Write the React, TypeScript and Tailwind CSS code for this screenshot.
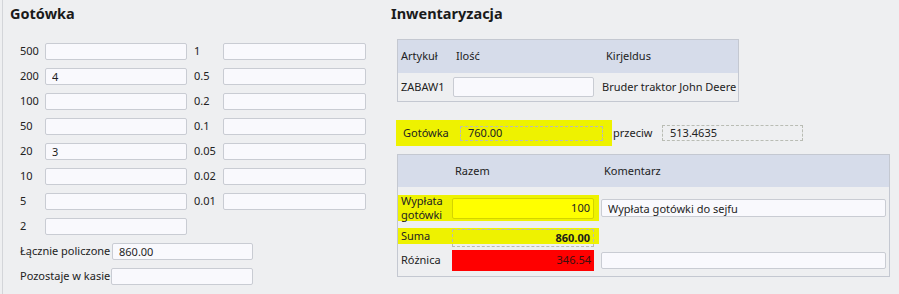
import React from "react";

const LEFT_ROWS = [
  ["500", ""],
  ["200", "4"],
  ["100", ""],
  ["50", ""],
  ["20", "3"],
  ["10", ""],
  ["5", ""],
  ["2", ""],
];

const RIGHT_ROWS = [
  ["1", ""],
  ["0.5", ""],
  ["0.2", ""],
  ["0.1", ""],
  ["0.05", ""],
  ["0.02", ""],
  ["0.01", ""],
];

function Field({ value = "", className = "" }: { value?: string; className?: string }) {
  return (
    <input
      readOnly
      value={value}
      className={`h-[17px] rounded-[2px] border border-[#c9ccd3] bg-[#f9f9fd] px-[6px] text-[11px] text-[#1e1e1e] outline-none ${className}`}
    />
  );
}

function Dotted({ value, className = "" }: { value: string; className?: string }) {
  return (
    <div className={`flex items-center border border-dashed border-[#b9bcb4] px-[7px] ${className}`}>
      {value}
    </div>
  );
}

export default function App() {
  return (
    <div className="flex h-[294px] w-[899px] whitespace-nowrap bg-[#eeeff1] font-['Noto_Sans',sans-serif] text-[11px] text-[#222]">
      {/* Gotówka */}
      <section className="ml-[2px] flex w-[378px] flex-col border-l border-[#d3d5d9]">
        <h2 className="pl-[7px] pt-[3px] text-[14.5px] font-bold leading-[20px] text-[#1a1a1a]">Gotówka</h2>

        <div className="ml-[17px] mt-[20px] grid grid-cols-[25px_142px_36px_143px] auto-rows-[17px] gap-y-[8px]">
          {LEFT_ROWS.map(([label, val], i) => (
            <React.Fragment key={label}>
              <span className="flex items-center">{label}</span>
              <Field value={val} className="w-[142px]" />
              {RIGHT_ROWS[i] ? (
                <>
                  <span className="flex items-center pl-[7px]">{RIGHT_ROWS[i][0]}</span>
                  <Field value={RIGHT_ROWS[i][1]} className="w-[143px]" />
                </>
              ) : (
                <>
                  <span />
                  <span />
                </>
              )}
            </React.Fragment>
          ))}
        </div>

        <div className="ml-[17px] mt-[8px] flex h-[17px] items-center">
          <span className="w-[92px]">Łącznie policzone</span>
          <Field value="860.00" className="w-[141px]" />
        </div>
        <div className="ml-[17px] mt-[8px] flex h-[17px] items-center">
          <span className="w-[91px]">Pozostaje w kasie</span>
          <Field className="w-[142px]" />
        </div>
      </section>

      {/* Inwentaryzacja */}
      <section className="flex flex-1 flex-col">
        <h2 className="pl-[11px] pt-[3px] text-[14.5px] font-bold leading-[20px] text-[#1a1a1a]">Inwentaryzacja</h2>

        <div className="ml-[17px] mt-[16px] w-[342px] border border-[#c4c8d1]">
          <div className="flex h-[33px] items-center bg-[#d6dcea]">
            <span className="w-[56px] pl-[3px]">Artykuł</span>
            <span className="w-[150px] pl-[2px]">Ilość</span>
            <span className="pl-[2px]">Kirjeldus</span>
          </div>
          <div className="flex h-[28px] items-center">
            <span className="w-[55px] pl-[3px]">ZABAW1</span>
            <Field className="h-[20px] w-[141px]" />
            <span className="pl-[8px]">Bruder traktor John Deere</span>
          </div>
        </div>

        <div className="mt-[18px] flex items-center">
          <div className="ml-[16px] flex h-[26px] w-[216px] items-center bg-[#eef200]">
            <span className="w-[64px] pl-[7px]">Gotówka</span>
            <Dotted value="760.00" className="h-[15px] w-[143px]" />
          </div>
          <span className="ml-[1px] w-[49px]">przeciw</span>
          <Dotted value="513.4635" className="h-[16px] w-[141px]" />
        </div>

        <div className="ml-[17px] mt-[8px] w-[493px] border border-[#c4c8d1] pb-[5px]">
          <div className="flex h-[32px] items-center bg-[#d6dcea]">
            <span className="w-[206px] pl-[57px]">Razem</span>
            <span>Komentarz</span>
          </div>

          <div className="mt-[8px] flex items-start">
            <div className="flex h-[26px] w-[201px] items-center bg-[#eef200]">
              <span className="w-[54px] pl-[3px] leading-[14px]">
                Wypłata
                <br />
                gotówki
              </span>
              <div className="flex h-[21px] w-[142px] items-center justify-end rounded-[2px] border border-[#d4d400] bg-[#ffff00] pr-[3px]">
                100
              </div>
            </div>
            <Field value="Wypłata gotówki do sejfu" className="ml-[2px] mt-[4px] h-[18px] w-[285px]" />
          </div>

          <div className="mt-[7px] flex h-[19px] items-start">
            <div className="flex h-[16px] w-[201px] items-start bg-[#eef200]">
              <span className="w-[54px] pl-[3px] leading-[16px]">Suma</span>
              <Dotted
                value="860.00"
                className="mt-[1px] h-[18px] w-[142px] justify-end pr-[3px] font-bold text-[#1a1a1a]"
              />
            </div>
          </div>

          <div className="mt-[3px] flex items-center">
            <span className="w-[54px] pl-[3px]">Różnica</span>
            <div className="flex h-[21px] w-[142px] items-center justify-end bg-[#ff0000] pr-[3px] text-[#3a1010]">
              346.54
            </div>
            <Field className="ml-[7px] h-[17px] w-[285px]" />
          </div>
        </div>
      </section>
    </div>
  );
}
